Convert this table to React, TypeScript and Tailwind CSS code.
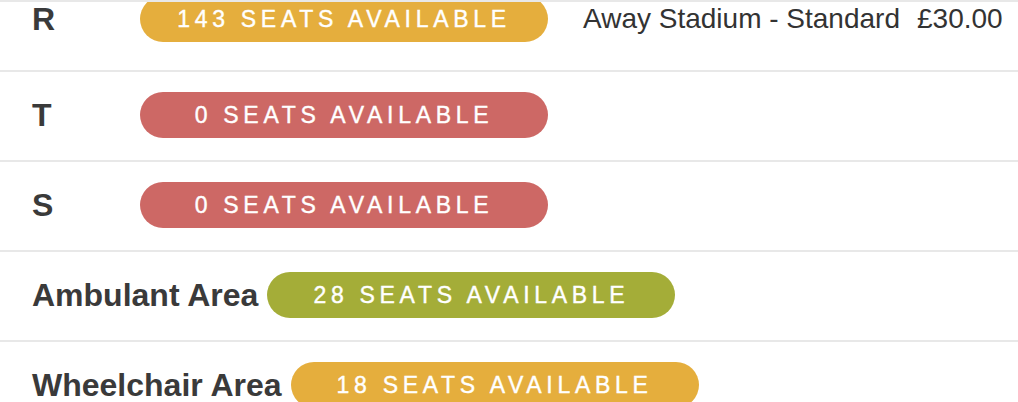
import React from "react";

type Row = { label: string; seats: number; color: string; extra?: boolean };

const rows: Row[] = [
  { label: "R", seats: 143, color: "bg-[#e5ae3d]", extra: true },
  { label: "T", seats: 0, color: "bg-[#cd6865]" },
  { label: "S", seats: 0, color: "bg-[#cd6865]" },
  { label: "Ambulant Area", seats: 28, color: "bg-[#a4ad38]" },
  { label: "Wheelchair Area", seats: 18, color: "bg-[#e5ae3d]" },
];

export default function App() {
  return (
    <div className="h-[402px] w-[1018px] overflow-hidden bg-white font-['Liberation_Sans',Arial,sans-serif] text-[#3a3a3a]">
      <div className="h-[2px] bg-[#e8e8e8]" />
      <div className="overflow-hidden">
        {rows.map((r, i) => (
          <div
            key={i}
            className={
              "flex items-center border-b-2 border-[#e8e8e8] pl-8 pt-5 " +
              (i === 0 ? "-mt-[26px] pb-[28px]" : "pb-[22px]")
            }
          >
            <div className="mr-[9px] min-w-[99px] text-[32px] font-bold leading-none">
              {r.label}
            </div>
            <div
              className={
                "flex h-[46px] w-[408px] shrink-0 items-center justify-center rounded-full text-[23px] tracking-[4.7px] text-white [-webkit-text-stroke:0.4px_white] " +
                r.color
              }
            >
              <span>{r.seats} SEATS AVAILABLE</span>
            </div>
            {r.extra && (
              <div className="ml-[35px] flex items-center text-[28px] leading-none text-[#333]">
                <span>Away Stadium - Standard</span>
                <span className="ml-[17px]">£30.00</span>
              </div>
            )}
          </div>
        ))}
      </div>
    </div>
  );
}
